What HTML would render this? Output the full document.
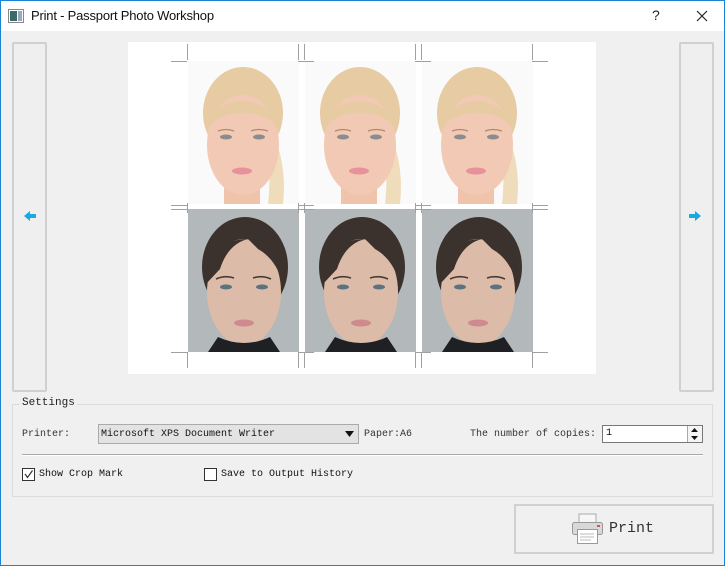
<!DOCTYPE html>
<html><head><style>
*{margin:0;padding:0;box-sizing:border-box}
body{width:725px;height:566px;background:#f0f0f0;font-family:"Liberation Mono",monospace;font-size:10px;color:#222;position:relative;overflow:hidden}
.win{position:absolute;left:0;top:0;width:725px;height:566px;border:1px solid #1883d7}
.title{position:absolute;left:1px;top:1px;width:723px;height:30px;background:#fff}
.title .t{position:absolute;left:30px;top:7px;font-family:"Liberation Sans",sans-serif;font-size:13px;color:#111;letter-spacing:-0.2px}
.abs{position:absolute}
.navbtn{position:absolute;top:42px;width:35px;height:350px;border:2px solid #d0d0d0;border-radius:2px;background:#efefef}
.page{position:absolute;left:128px;top:42px;width:468px;height:332px;background:#fff}
.ph{position:absolute;width:111px;height:143px}
.grp{position:absolute;left:12px;top:404px;width:701px;height:93px;border:1px solid #dcdcdc}
.lbl{position:absolute;font-size:10px;color:#333;white-space:nowrap}
.combo{position:absolute;left:98px;top:424px;width:261px;height:20px;border:1px solid #aaa;background:#e3e3e3}
.spin{position:absolute;left:602px;top:425px;width:101px;height:18px;border:1px solid #777;background:#fff}
.cb{position:absolute;width:13px;height:13px;border:1px solid #333;background:#fff}
.pbtn{position:absolute;left:514px;top:504px;width:200px;height:50px;border:2px solid #d0d0d0;background:#f0f0f0}
</style></head><body>
<div class="win"></div>
<div class="title">
<svg class="abs" style="left:7px;top:8px" width="16" height="14"><rect x="0.5" y="0.5" width="15" height="13" fill="#fff" stroke="#888"/><rect x="2" y="2" width="7" height="10" fill="#3a6a6a"/><rect x="10" y="2" width="4" height="10" fill="#9ab"/></svg>
<div class="t">Print - Passport Photo Workshop</div>
<div class="abs" style="left:651px;top:6px;font-family:'Liberation Sans',sans-serif;font-size:14px">?</div>
<svg class="abs" style="left:695px;top:9px" width="12" height="12"><path d="M1 1L11 11M11 1L1 11" stroke="#222" stroke-width="1.2"/></svg>
</div>

<div class="navbtn" style="left:12px"></div>
<svg class="abs" style="left:23px;top:210px" width="14" height="12"><path d="M1 6L7 1V4H13V8H7V11Z" fill="#1aa8e0"/></svg>
<div class="navbtn" style="left:679px"></div>
<svg class="abs" style="left:688px;top:210px" width="14" height="12"><path d="M13 6L7 1V4H1V8H7V11Z" fill="#1aa8e0"/></svg>

<svg width="0" height="0" style="position:absolute">
<defs>
<g id="blonde">
<rect width="111" height="143" fill="#fafafa"/>
<path d="M78 60 Q100 95 95 143 L80 143 Q85 100 72 70Z" fill="#eedcbb"/>
<ellipse cx="55" cy="52" rx="40" ry="46" fill="#e6cba3"/>
<rect x="36" y="110" width="36" height="33" fill="#f0c3ab"/>
<ellipse cx="55" cy="84" rx="36" ry="50" fill="#f2c9b4"/>
<path d="M19 70 Q22 42 55 40 Q86 42 91 70 Q82 52 55 52 Q28 52 19 70Z" fill="#e6cba3"/>
<ellipse cx="38" cy="76" rx="6" ry="2.5" fill="#8a8d90"/>
<ellipse cx="71" cy="76" rx="6" ry="2.5" fill="#8a8d90"/>
<path d="M30 70 Q38 67 46 70 M63 70 Q71 67 80 70" stroke="#b08a70" stroke-width="1.3" fill="none"/>
<ellipse cx="54" cy="110" rx="10" ry="3.5" fill="#e7919a"/>
</g>
<g id="brun">
<rect width="111" height="143" fill="#b3b8bb"/>
<ellipse cx="57" cy="58" rx="43" ry="50" fill="#3b312d"/>
<rect x="38" y="112" width="38" height="31" fill="#d6b4a0"/>
<ellipse cx="56" cy="83" rx="37" ry="53" fill="#dcbca8"/>
<path d="M18 75 Q22 30 60 30 Q40 35 32 60Z" fill="#3b312d"/>
<path d="M60 30 Q95 32 95 75 Q88 50 70 40Z" fill="#3b312d"/>
<ellipse cx="38" cy="78" rx="6" ry="2.5" fill="#5b7280"/>
<ellipse cx="74" cy="78" rx="6" ry="2.5" fill="#5b7280"/>
<path d="M28 70 Q37 66 46 69 M65 69 Q74 66 83 70" stroke="#4a3a32" stroke-width="1.6" fill="none"/>
<ellipse cx="56" cy="114" rx="10" ry="3.5" fill="#cf8a90"/>
<path d="M20 143 L30 128 Q56 140 82 128 L92 143Z" fill="#1f2024"/>
</g>
</defs></svg>

<div class="page"></div>
<svg class="ph" style="left:188px;top:61px"><use href="#blonde"/></svg>
<svg class="ph" style="left:305px;top:61px"><use href="#blonde"/></svg>
<svg class="ph" style="left:422px;top:61px"><use href="#blonde"/></svg>
<svg class="ph" style="left:188px;top:209px"><use href="#brun"/></svg>
<svg class="ph" style="left:305px;top:209px"><use href="#brun"/></svg>
<svg class="ph" style="left:422px;top:209px"><use href="#brun"/></svg>

<svg class="abs" style="left:128px;top:42px" width="468" height="332">
<g stroke="#a0a0a0" stroke-width="1" fill="none">
<path d="M59.5 2V18 M170.5 2V18 M176.5 2V18 M287.5 2V18 M293.5 2V18 M404.5 2V18"/>
<path d="M43 19.5H59 M170 19.5H186 M287 19.5H303 M404 19.5H420"/>
<path d="M43 163.5H59 M43 167.5H59 M170 163.5H186 M170 167.5H186 M287 163.5H303 M287 167.5H303 M404 163.5H420 M404 167.5H420"/>
<path d="M59.5 161V171 M170.5 161V171 M176.5 161V171 M287.5 161V171 M293.5 161V171 M404.5 161V171"/>
<path d="M43 310.5H59 M170 310.5H186 M287 310.5H303 M404 310.5H420"/>
<path d="M59.5 310V326 M170.5 310V326 M176.5 310V326 M287.5 310V326 M293.5 310V326 M404.5 310V326"/>
</g></svg>

<div class="grp"></div>
<div class="lbl" style="left:20px;top:397px;background:#f0f0f0;padding:0 2px;font-size:11px;color:#222">Settings</div>
<div class="lbl" style="left:22px;top:429px">Printer:</div>
<div class="combo"><span class="lbl" style="left:2px;top:4px;color:#111">Microsoft XPS Document Writer</span>
<svg class="abs" style="left:246px;top:6px" width="9" height="6"><path d="M0 0H9L4.5 6Z" fill="#111"/></svg></div>
<div class="lbl" style="left:364px;top:429px">Paper:A6</div>
<div class="lbl" style="left:470px;top:429px">The number of copies:</div>
<div class="spin"><span class="lbl" style="left:3px;top:2px;color:#111">1</span>
<div class="abs" style="left:84px;top:0;width:15px;height:16px;border-left:1px solid #aaa;background:#f4f4f4"></div>
<svg class="abs" style="left:87px;top:2px" width="9" height="12"><path d="M1 4H8L4.5 0Z M1 8H8L4.5 12Z" fill="#111"/></svg></div>
<div class="abs" style="left:22px;top:454px;width:681px;height:1px;background:#aaa"></div>
<div class="abs" style="left:22px;top:455px;width:681px;height:1px;background:#fff"></div>
<div class="cb" style="left:22px;top:468px"><svg width="11" height="11"><path d="M2 5L4.5 8.5L9.5 1.5" stroke="#333" stroke-width="1.2" fill="none"/></svg></div>
<div class="lbl" style="left:39px;top:469px;color:#111">Show Crop Mark</div>
<div class="cb" style="left:204px;top:468px"></div>
<div class="lbl" style="left:221px;top:469px;color:#111">Save to Output History</div>

<div class="pbtn"></div>
<svg class="abs" style="left:571px;top:513px" width="34" height="32">
<rect x="8" y="1" width="17" height="10" fill="#f6f6f6" stroke="#aaa"/>
<rect x="1.5" y="9.5" width="30" height="12" rx="2" fill="#d8d8d8" stroke="#999"/>
<rect x="26" y="12" width="3" height="2" fill="#e05050"/>
<rect x="6.5" y="16.5" width="20" height="14" fill="#fff" stroke="#999"/>
<path d="M9 21H23M9 24H23M9 27H20" stroke="#bbb"/>
</svg>
<div class="lbl" style="left:609px;top:520px;font-size:15px;color:#333">Print</div>
</body></html>
